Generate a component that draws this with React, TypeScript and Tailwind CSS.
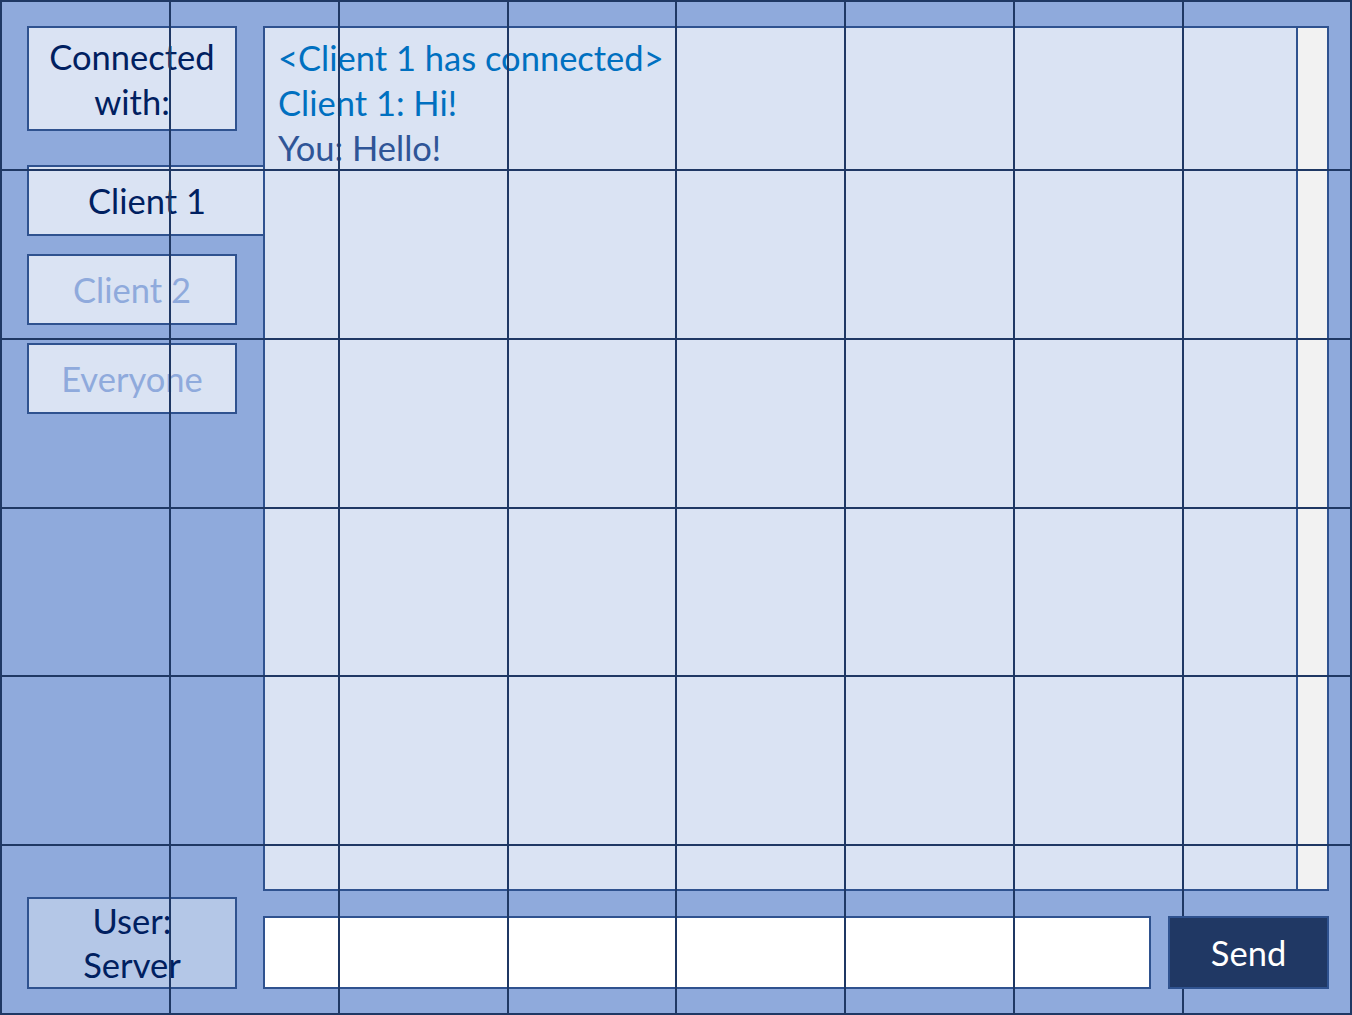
const FONT = "font-['Lato','Liberation_Sans',sans-serif]";

function GridOverlay() {
  const cells = Array.from({ length: 48 });
  return (
    <div className="pointer-events-none absolute inset-0 z-10">
      <div className="absolute left-[2px] top-[2px] grid grid-cols-[169px_169px_169px_168px_169px_169px_169px_169px] grid-rows-[169px_169px_169px_168px_169px_169px]">
        {cells.map((_, i) => (
          <div key={i} className="border-r-2 border-b-2 border-[#1f3864]" />
        ))}
      </div>
      <div className="absolute inset-0 border-2 border-[#1f3864]" />
    </div>
  );
}

function SideButton({ label }: { label: string }) {
  return (
    <div className="mt-[18px] flex h-[71px] w-[210px] items-center justify-center border-2 border-[#2f528f] bg-[#dae3f3] text-[34.5px] text-[#8faadc]">
      {label}
    </div>
  );
}

export default function App() {
  return (
    <div className={`relative h-[1015px] w-[1352px] overflow-hidden bg-[#8faadc] ${FONT}`}>
      <div className="flex flex-col pl-[27px] pr-[23px] pt-[26px]">
        <div className="flex h-[865px]">
          <div className="flex w-[210px] shrink-0 flex-col">
            <div className="flex h-[105px] flex-col items-center justify-center border-2 border-[#2f528f] bg-[#dae3f3] text-[34.5px] leading-[45px] text-[#002060]">
              <span>Connected</span>
              <span>with:</span>
            </div>
            <div className="mt-[34px] flex h-[71px] w-[238px] items-center justify-center border-2 border-r-0 border-[#2f528f] bg-[#dae3f3] text-[34.5px] text-[#002060]">
              Client 1
            </div>
            <SideButton label="Client 2" />
            <SideButton label="Everyone" />
          </div>
          <div className="ml-[26px] flex flex-1 border-2 border-[#2f528f] bg-[#dae3f3]">
            <div className="flex-1 px-[13px] pt-[7px] text-[34.5px] leading-[45px]">
              <div className="text-[#0070c0]">&lt;Client 1 has connected&gt;</div>
              <div className="text-[#0070c0]">Client 1: Hi!</div>
              <div className="text-[#2f5597]">You: Hello!</div>
            </div>
            <div className="w-[31px] border-l-2 border-[#2f528f] bg-[#f2f2f2]" />
          </div>
        </div>
        <div className="mt-[6px] flex items-end">
          <div className="flex h-[92px] w-[210px] shrink-0 flex-col items-center justify-center border-2 border-[#2f528f] bg-[#b4c7e7] text-[34.5px] leading-[44px] text-[#002060]">
            <span>User:</span>
            <span>Server</span>
          </div>
          <div className="ml-[26px] h-[73px] flex-1 border-2 border-[#2f528f] bg-white" />
          <div className="relative z-20 ml-[17px] flex h-[73px] w-[161px] items-center justify-center border-2 border-[#2f528f] bg-[#203864] text-[34.5px] text-white">
            Send
          </div>
        </div>
      </div>
      <GridOverlay />
    </div>
  );
}
